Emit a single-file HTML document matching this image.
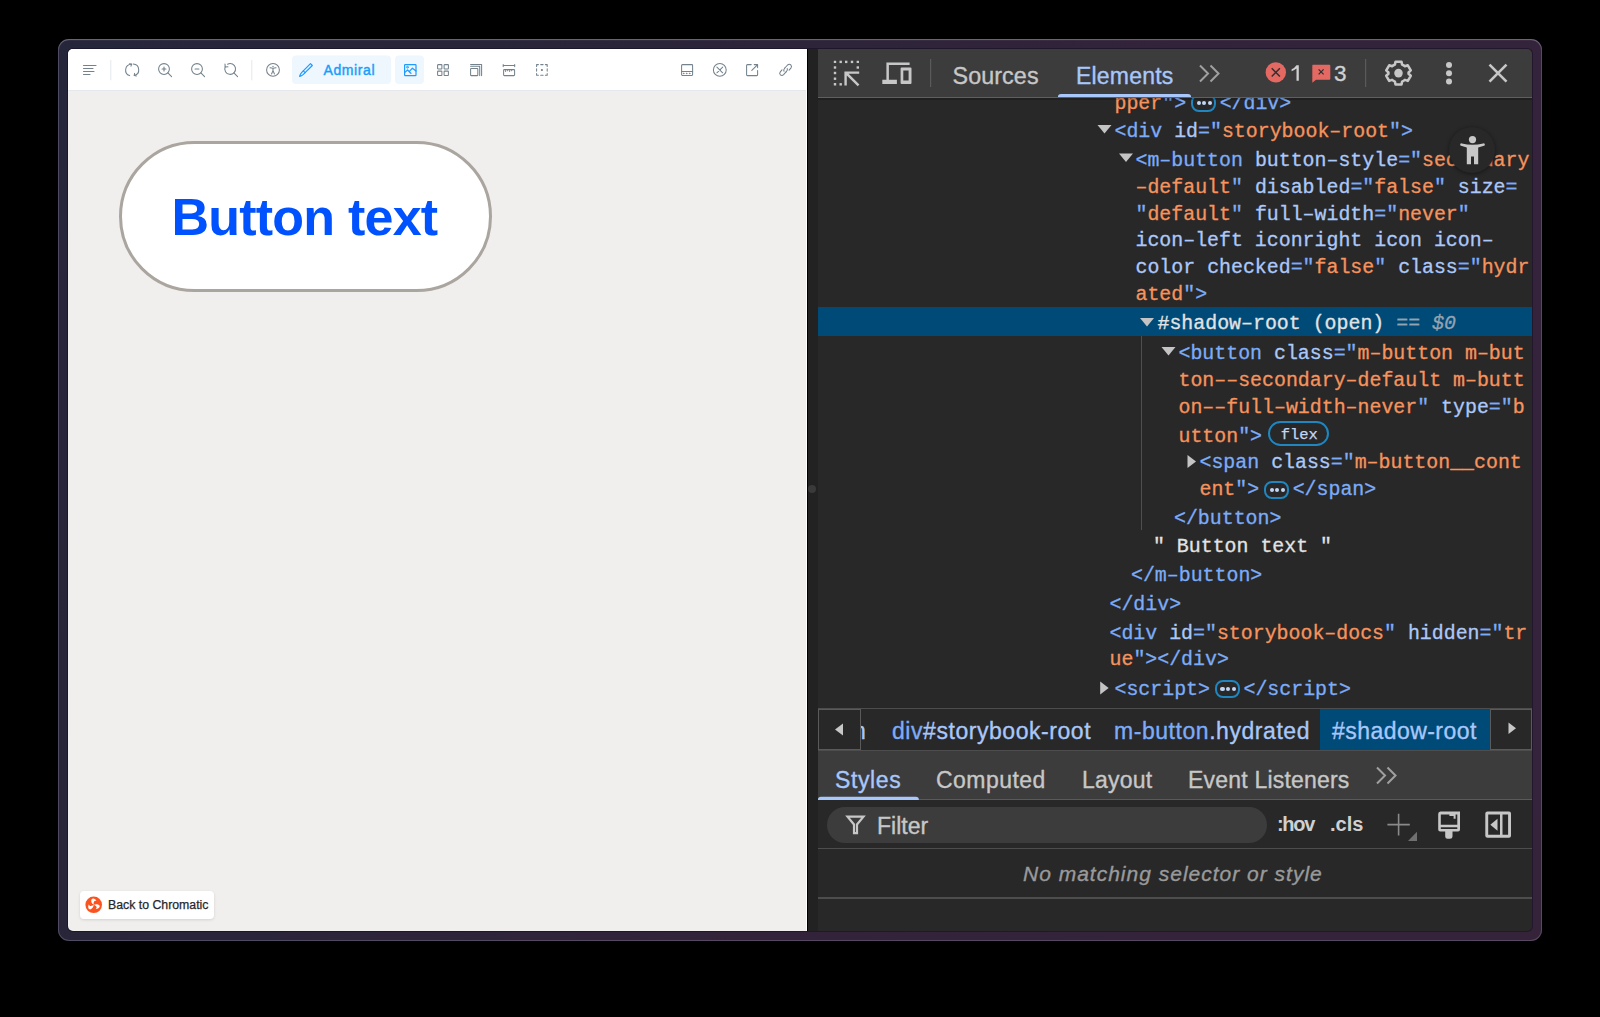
<!DOCTYPE html>
<html><head><meta charset="utf-8"><style>
*{box-sizing:border-box;margin:0;padding:0}
html,body{width:1600px;height:1017px;overflow:hidden;background:#000;font-family:"Liberation Sans",sans-serif}
.abs{position:absolute}
#frame{position:absolute;left:58px;top:39px;width:1484px;height:902px;border-radius:11px;
 background:linear-gradient(115deg,#26263a 0%,#2b2539 32%,#33233a 60%,#35233a 100%);
 box-shadow:inset 0 0 0 1px rgba(160,150,180,.33), inset 0 1.2px 0 0 rgba(190,180,210,.25)}
#inner{position:absolute;left:68px;top:49px;width:1464px;height:882px;border-radius:5px;overflow:hidden;background:#222;box-shadow:0 0 0 1px rgba(8,4,24,.4)}
#page{position:absolute;left:-68px;top:-49px;width:1600px;height:1017px}
.ln{position:absolute;white-space:pre;font-family:"Liberation Mono",monospace;font-size:19.9px;line-height:27px;height:27px;-webkit-text-stroke:0.3px currentColor}
.dots{display:inline-block;position:relative;width:24.5px;height:18px;margin:0 4px 0 5px;border:2px solid #1f86c0;border-radius:8px;vertical-align:-3.5px;-webkit-text-stroke:0}
.dots i{position:absolute;top:4.9px;width:4.2px;height:4.2px;border-radius:50%;background:#c2d6f5}
.dots i:nth-child(1){left:3.4px}.dots i:nth-child(2){left:9px}.dots i:nth-child(3){left:14.6px}
.flexb{display:inline-block;margin-left:6px;width:61px;height:25px;border:2px solid #1f86c0;border-radius:13px;font-size:15.5px;line-height:21px;padding-left:1.5px;padding-top:2px;text-align:center;color:#c2d6f5;vertical-align:3px;-webkit-text-stroke:0.25px currentColor}
.dtui{position:absolute;font-size:23px;line-height:28px;white-space:nowrap;font-family:"Liberation Sans",sans-serif;-webkit-text-stroke:0.35px currentColor}
.a11y{left:1449px;top:127px;width:46px;height:46px;border-radius:50%;background:#282828;box-shadow:0 1px 4px rgba(0,0,0,.45)}
</style></head><body>
<div id="frame"></div>
<div id="inner"><div id="page">
<div class="abs" style="left:68px;top:49px;width:738px;height:882px;background:#f0efed"></div>
<div class="abs" style="left:68px;top:49px;width:738px;height:42px;background:#fff;border-bottom:1px solid #e4e8ec"></div>
<svg class="abs" style="left:0;top:0" width="810" height="100" viewBox="0 0 810 100" fill="none" stroke="#73828c" stroke-width="1.05" stroke-linecap="round" stroke-linejoin="round">
 <path d="M83.5 65.5h12.5M83.5 68.5h9.5M83.5 71.5h10.5M83.5 74.5h6.5" stroke-width="1.1"/>
 <path d="M110.8 60.5v19.5M251.8 60.5v19.5" stroke="#e3e8ed" stroke-width="1"/>
 <g transform="translate(125 63)">
  <path d="M6.3 1.3 A5.8 5.8 0 0 0 4.6 12.6"/>
  <path d="M8.2 1.0 A5.8 5.8 0 0 1 9.4 12.4"/>
  <path d="M4.4 0.8 L6.6 1.1 L6.0 3.2"/>
  <path d="M9.6 10.4 L9.2 12.6 L11.4 13.0"/>
 </g>
 <g transform="translate(158 63)">
  <circle cx="6" cy="6" r="5.4"/>
  <path d="M9.9 9.9 L13.6 13.6"/>
  <path d="M6 4.1v3.8M4.1 6h3.8" stroke-width="1.15"/>
 </g>
 <g transform="translate(191 63)">
  <circle cx="6" cy="6" r="5.4"/>
  <path d="M9.9 9.9 L13.6 13.6"/>
  <path d="M4.1 6h3.8" stroke-width="1.15"/>
 </g>
 <g transform="translate(224 63)">
  <path d="M1.2 3.8 A5.4 5.4 0 1 0 3.6 1.2"/>
  <path d="M1.0 1.0 L1.2 3.9 L4.0 3.7"/>
  <path d="M9.9 9.9 L13.6 13.6"/>
 </g>
 <g transform="translate(266 63)">
  <circle cx="7" cy="6.9" r="6.4"/>
  <circle cx="7" cy="3.4" r="0.7" fill="#73828c" stroke="none"/>
  <path d="M4 4.8 Q7 5.6 10 4.8M7 5.3v2.6M5.6 10.9 L7 7.6 L8.4 10.9" stroke-width="1.1"/>
 </g>
 <rect x="292" y="55.5" width="99" height="28.5" rx="4" fill="#eef6fe" stroke="none"/>
 <rect x="395" y="55.5" width="29" height="28.5" rx="4" fill="#eef6fe" stroke="none"/>
 <g transform="translate(299 63)" stroke="#1e9bfc" stroke-width="1.2">
  <path d="M13.3 2.5 L11.5 0.7 L4.3 7.9 L6.1 9.7 Z"/>
  <path d="M4.3 7.9 L2.6 9.6 Q0.8 11.6 0.6 13.4 Q2.4 13.2 4.4 11.4 L6.1 9.7"/>
 </g>
 <g transform="translate(404 64)" stroke="#1e9bfc" stroke-width="1.2">
  <rect x="0.6" y="0.6" width="11.4" height="11" rx="0.6"/>
  <circle cx="3.4" cy="3.2" r="0.9" stroke-width="0.9"/>
  <path d="M0.6 8.6 L3.6 6.0 L6.3 8.8 M4.6 7.0 L7.0 9.4 M5.2 7.6 L8.4 4.2 L12 7.0"/>
 </g>
 <g transform="translate(437 64)">
  <rect x="0.6" y="0.6" width="4.3" height="4.3" rx="0.5"/>
  <rect x="7.1" y="0.6" width="4.3" height="4.3" rx="0.5"/>
  <rect x="0.6" y="7.1" width="4.3" height="4.3" rx="0.5"/>
  <rect x="7.1" y="7.1" width="4.3" height="4.3" rx="0.5"/>
 </g>
 <g transform="translate(470 64)">
  <rect x="0.6" y="4.4" width="7.2" height="7.2" rx="0.5"/>
  <path d="M0.6 2.3 H9.7 V11.6 M0.6 0.4 H11.6 V11.6"/>
 </g>
 <g transform="translate(503 64)">
  <path d="M0.2 1.5 H11.7 M0.2 0.4 V2.6 M11.7 0.4 V2.6"/>
  <rect x="0.6" y="5.6" width="11" height="6" rx="0.8"/>
  <path d="M2.6 5.8 V7.6 M4.6 5.8 V6.8 M6.6 5.8 V7.6 M8.6 5.8 V6.8" stroke-width="0.9"/>
 </g>
 <g transform="translate(536 64)">
  <path d="M0.6 2.4 V0.6 H2.4 M4.7 0.6 H7.1 M9.4 0.6 H11.2 V2.4 M11.2 4.7 V7.1 M11.2 9.4 V11.2 H9.4 M7.1 11.2 H4.7 M2.4 11.2 H0.6 V9.4 M0.6 7.1 V4.7"/>
  <circle cx="5.9" cy="6" r="0.55" fill="#73828c"/>
 </g>
 <g transform="translate(681 64)">
  <rect x="0.6" y="0.6" width="11" height="10.8" rx="0.8"/>
  <path d="M0.6 7.4 H11.6"/>
  <circle cx="2.6" cy="9.4" r="0.35" fill="#73828c" stroke-width="0.8"/>
  <circle cx="5.6" cy="9.4" r="0.35" fill="#73828c" stroke-width="0.8"/>
  <circle cx="8.6" cy="9.4" r="0.35" fill="#73828c" stroke-width="0.8"/>
 </g>
 <g transform="translate(713 63)">
  <circle cx="6.8" cy="6.9" r="6.4"/>
  <path d="M3.9 4.1 L9.7 9.8 M9.7 4.1 L3.9 9.8"/>
 </g>
 <g transform="translate(746 64)">
  <path d="M5.2 0.6 H1.4 Q0.6 0.6 0.6 1.4 V10.8 Q0.6 11.6 1.4 11.6 H10.8 Q11.6 11.6 11.6 10.8 V6.4"/>
  <path d="M8.2 0.6 H11.6 V3.6 M11.4 0.8 L5.8 6.4"/>
 </g>
 <g transform="translate(779 63)">
  <path d="M5.8 5.0 L8.6 2.0 Q10.2 0.6 11.8 1.9 Q13.2 3.4 11.9 5.1 L10.1 7.1"/>
  <path d="M7.3 8.7 L4.6 11.7 Q3.0 13.2 1.4 11.9 Q0 10.4 1.3 8.8 L3.0 6.9"/>
  <path d="M5.0 8.3 Q4.2 6.9 5.8 5.0 M8.2 5.6 Q9.0 7.0 7.3 8.7"/>
 </g>
</svg>
<div class="abs" style="left:323.5px;top:61px;font-size:14px;color:#159efc;line-height:18px;white-space:nowrap;letter-spacing:0.6px;-webkit-text-stroke:0.4px currentColor">Admiral</div>
<div class="abs" style="left:118.5px;top:141px;width:373px;height:150.5px;border:3px solid #aaa59f;border-radius:80px;background:#fff"></div>
<div class="abs" style="left:171.5px;top:187.8px;font-size:52px;letter-spacing:-0.78px;font-weight:bold;color:#0052fe;line-height:58px;white-space:nowrap">Button text</div>
<div class="abs" style="left:80px;top:891px;width:134px;height:28px;background:#fff;border-radius:4px;box-shadow:0 1px 3px rgba(0,0,0,.12)"></div>
<svg class="abs" style="left:85px;top:896px" width="18" height="18" viewBox="0 0 18 18">
 <circle cx="8.7" cy="8.8" r="8.3" fill="#fc521f"/>
 <g fill="#fff">
  <path d="M8.7 8.8 Q5.6 6.6 6.4 3.4 Q7.2 2.6 8.4 2.6 Q10.6 3.0 11.4 5.0 Q10.4 4.6 9.2 5.2 Q8.2 6.6 8.7 8.8 Z"/>
  <path d="M8.7 8.8 Q12.2 7.2 14.6 9.5 Q14.9 10.6 14.3 11.6 Q12.8 13.3 10.7 13.0 Q11.6 12.3 11.7 11.0 Q10.9 9.5 8.7 8.8 Z"/>
  <path d="M8.7 8.8 Q8.3 12.6 5.1 13.5 Q4.0 13.2 3.4 12.2 Q2.7 10.1 3.9 8.3 Q4.0 9.4 5.1 10.1 Q6.8 10.2 8.7 8.8 Z"/>
 </g>
</svg>
<div class="abs" style="left:108px;top:898px;font-size:12.3px;color:#24282c;line-height:14px;white-space:nowrap;-webkit-text-stroke:0.25px currentColor">Back to Chromatic</div>

<div class="abs" style="left:806px;top:49px;width:1px;height:882px;background:#fff"></div>
<div class="abs" style="left:807px;top:49px;width:1px;height:882px;background:#000"></div>
<div class="abs" style="left:808px;top:49px;width:10px;height:882px;background:#222"></div>
<div class="abs" style="left:807.5px;top:485px;width:8px;height:8px;border-radius:50%;background:#3a3a3a"></div>

<!-- devtools -->
<div class="abs" style="left:818px;top:49px;width:714px;height:882px;background:#282828"></div>
<div class="abs" style="left:818px;top:98px;width:714px;height:610px;overflow:hidden">
 <div class="abs" style="left:-818px;top:-98px;width:1600px;height:1017px">
  <div class="abs" style="left:818px;top:307px;width:714px;height:28.5px;background:#004a77"></div>
  <div class="abs" style="left:1140.5px;top:336px;width:1.2px;height:194px;background:#4f4f4f"></div>
  <svg class="abs" style="left:0;top:0" width="1600" height="1017" fill="#c4c4c4">
   <path d="M1097.5 125h14l-7.0 8.5z"/><path d="M1119 153.5h14l-7.0 8.5z"/><path d="M1140 318h14l-7.0 8.5z"/><path d="M1161.5 347h14l-7.0 8.5z"/>
   <path d="M1187.5 455v13l8.5 -6.5z"/><path d="M1100.2 681.5v13l8.5 -6.5z"/>
  </svg>
  <div class="ln" style="left:1114.5px;top:89.5px"><span style="color:#f7935c">pper</span><span style="color:#7cacf8">&quot;&gt;</span><span class="dots"><i></i><i></i><i></i></span><span style="color:#7cacf8">&lt;/div&gt;</span></div>
<div class="ln" style="left:1114.5px;top:118.0px"><span style="color:#7cacf8">&lt;div</span> <span style="color:#acc8f8">id</span><span style="color:#7cacf8">=&quot;</span><span style="color:#f7935c">storybook–root</span><span style="color:#7cacf8">&quot;&gt;</span></div>
<div class="ln" style="left:1135.5px;top:146.7px"><span style="color:#7cacf8">&lt;m–button</span> <span style="color:#acc8f8">button–style</span><span style="color:#7cacf8">=&quot;</span><span style="color:#f7935c">secondary</span></div>
<div class="ln" style="left:1135.5px;top:173.7px"><span style="color:#f7935c">–default</span><span style="color:#7cacf8">&quot;</span> <span style="color:#acc8f8">disabled</span><span style="color:#7cacf8">=&quot;</span><span style="color:#f7935c">false</span><span style="color:#7cacf8">&quot;</span> <span style="color:#acc8f8">size</span><span style="color:#7cacf8">=</span></div>
<div class="ln" style="left:1135.5px;top:200.7px"><span style="color:#7cacf8">&quot;</span><span style="color:#f7935c">default</span><span style="color:#7cacf8">&quot;</span> <span style="color:#acc8f8">full–width</span><span style="color:#7cacf8">=&quot;</span><span style="color:#f7935c">never</span><span style="color:#7cacf8">&quot;</span></div>
<div class="ln" style="left:1135.5px;top:227.2px"><span style="color:#acc8f8">icon–left iconright icon icon–</span></div>
<div class="ln" style="left:1135.5px;top:254.2px"><span style="color:#acc8f8">color</span> <span style="color:#acc8f8">checked</span><span style="color:#7cacf8">=&quot;</span><span style="color:#f7935c">false</span><span style="color:#7cacf8">&quot;</span> <span style="color:#acc8f8">class</span><span style="color:#7cacf8">=&quot;</span><span style="color:#f7935c">hydr</span></div>
<div class="ln" style="left:1135.5px;top:281.2px"><span style="color:#f7935c">ated</span><span style="color:#7cacf8">&quot;&gt;</span></div>
<div class="ln" style="left:1157.5px;top:310.2px"><span style="color:#e3e3e3">#shadow–root (open)</span> <span style="color:#94a3b0">==</span> <span style="color:#94a3b0;font-style:italic">$0</span></div>
<div class="ln" style="left:1178.5px;top:340.0px"><span style="color:#7cacf8">&lt;button</span> <span style="color:#acc8f8">class</span><span style="color:#7cacf8">=&quot;</span><span style="color:#f7935c">m–button m–but</span></div>
<div class="ln" style="left:1178.5px;top:367.1px"><span style="color:#f7935c">ton––secondary–default m–butt</span></div>
<div class="ln" style="left:1178.5px;top:394.1px"><span style="color:#f7935c">on––full–width–never</span><span style="color:#7cacf8">&quot;</span> <span style="color:#acc8f8">type</span><span style="color:#7cacf8">=&quot;</span><span style="color:#f7935c">b</span></div>
<div class="ln" style="left:1178.5px;top:420.7px"><span style="color:#f7935c">utton</span><span style="color:#7cacf8">&quot;&gt;</span><span class="flexb">flex</span></div>
<div class="ln" style="left:1199.5px;top:449.4px"><span style="color:#7cacf8">&lt;span</span> <span style="color:#acc8f8">class</span><span style="color:#7cacf8">=&quot;</span><span style="color:#f7935c">m–button__cont</span></div>
<div class="ln" style="left:1199.5px;top:476.4px"><span style="color:#f7935c">ent</span><span style="color:#7cacf8">&quot;&gt;</span><span class="dots"><i></i><i></i><i></i></span><span style="color:#7cacf8">&lt;/span&gt;</span></div>
<div class="ln" style="left:1174.0px;top:504.7px"><span style="color:#7cacf8">&lt;/button&gt;</span></div>
<div class="ln" style="left:1153.0px;top:532.9px"><span style="color:#e3e3e3">&quot; Button text &quot;</span></div>
<div class="ln" style="left:1131.0px;top:561.9px"><span style="color:#7cacf8">&lt;/m–button&gt;</span></div>
<div class="ln" style="left:1109.5px;top:590.5px"><span style="color:#7cacf8">&lt;/div&gt;</span></div>
<div class="ln" style="left:1109.5px;top:619.6px"><span style="color:#7cacf8">&lt;div</span> <span style="color:#acc8f8">id</span><span style="color:#7cacf8">=&quot;</span><span style="color:#f7935c">storybook–docs</span><span style="color:#7cacf8">&quot;</span> <span style="color:#acc8f8">hidden</span><span style="color:#7cacf8">=&quot;</span><span style="color:#f7935c">tr</span></div>
<div class="ln" style="left:1109.5px;top:646.3px"><span style="color:#f7935c">ue</span><span style="color:#7cacf8">&quot;&gt;</span><span style="color:#7cacf8">&lt;/div&gt;</span></div>
<div class="ln" style="left:1114.5px;top:675.5px"><span style="color:#7cacf8">&lt;script&gt;</span><span class="dots"><i></i><i></i><i></i></span><span style="color:#7cacf8">&lt;/script&gt;</span></div>
  <div class="abs a11y"></div>
  <svg class="abs" style="left:1455px;top:132px" width="36" height="36" viewBox="0 0 36 36" fill="#c7c7c7">
   <circle cx="17.5" cy="7.6" r="3.6"/>
   <path d="M5.2 12.2 Q5.6 11 6.8 11.4 Q17.5 14.2 28.2 11.4 Q29.4 11 29.8 12.2 Q30.2 13.4 29 13.8 L23.2 15.4 V32.2 H19 V24.6 H16 V32.2 H11.8 V15.4 L6 13.8 Q4.8 13.4 5.2 12.2 Z"/>
  </svg>
 </div>
</div>
<!-- devtools toolbar -->
<div class="abs" style="left:818px;top:49px;width:714px;height:48px;background:#3c3c3c"></div>
<div class="abs" style="left:818px;top:97px;width:714px;height:1px;background:#5f5f5f"></div>
<div class="abs" style="left:818px;top:98px;width:714px;height:1.5px;background:rgba(0,0,0,.18)"></div>
<svg class="abs" style="left:0;top:0" width="1600" height="120" fill="#c7c7c7">
 <!-- inspect dots -->
 <g>
  <rect x="833.8" y="60.7" width="2.4" height="2.4" rx="0.3"/><rect x="839.5" y="60.7" width="2.4" height="2.4"/><rect x="845" y="60.7" width="2.4" height="2.4"/><rect x="850.8" y="60.7" width="2.4" height="2.4"/><rect x="856.6" y="60.7" width="2.4" height="2.4" rx="0.3"/>
  <rect x="833.8" y="66.3" width="2.4" height="2.4"/><rect x="833.8" y="71.8" width="2.4" height="2.4"/><rect x="833.8" y="77.5" width="2.4" height="2.4"/><rect x="833.8" y="83.1" width="2.4" height="2.4" rx="0.3"/>
  <rect x="856.6" y="66.3" width="2.4" height="2.4"/><rect x="839.5" y="83.1" width="2.4" height="2.4"/>
  <path d="M844.4 71.4 H859.2 V73.8 H848.6 L859.4 84.6 L857.7 86.3 L846.8 75.4 V85.6 H844.4 Z"/>
 </g>
 <!-- device -->
 <path d="M886.4 62.4 H909.6 V64.9 H888.9 V79.8 H896.9 V84.1 H882.3 V79.8 H886.4 Z"/>
 <path fill-rule="evenodd" d="M901.6 67.5 H910.5 Q911.5 67.5 911.5 68.5 V83.1 Q911.5 84.1 910.5 84.1 H901.6 Q900.6 84.1 900.6 83.1 V68.5 Q900.6 67.5 901.6 67.5 Z M903.3 70.5 V80.6 H908.6 V70.5 Z"/>
 <rect x="930" y="59" width="1.2" height="28" fill="#5a5a5a"/>
 <rect x="1365" y="59" width="1.2" height="28" fill="#5a5a5a"/>
 <!-- >> -->
 <path d="M1200 65.5 L1208 73.5 L1200 81.5 M1210.5 65.5 L1218.5 73.5 L1210.5 81.5" fill="none" stroke="#a0a0a0" stroke-width="2"/>
 <!-- underline -->
 <path d="M1058 97 V96.5 Q1058 94 1061 94 H1188 Q1191 94 1191 96.5 V97 Z" fill="#a8c7fa"/>
 <!-- error -->
 <circle cx="1275.8" cy="72.4" r="10.2" fill="#e46962"/>
 <path d="M1271.7 68.3 L1279.9 76.5 M1279.9 68.3 L1271.7 76.5" stroke="#303030" stroke-width="1.5"/>
 <path d="M1313 64.7 H1329.3 Q1330.3 64.7 1330.3 65.7 V78.7 Q1330.3 79.7 1329.3 79.7 H1316 L1312.3 82.8 V65.7 Q1312.3 64.7 1313 64.7 Z" fill="#e46962"/>
 <path d="M1318.6 69.4 L1323.6 74.4 M1323.6 69.4 L1318.6 74.4" stroke="#303030" stroke-width="1.3"/>
 <!-- gear -->
 <g transform="translate(1398.5 73.1) scale(0.93)">
  <path fill="none" stroke="#c7c7c7" stroke-width="2.75" stroke-linejoin="round" d="M-3.2 -12.3 H3.2 L3.9 -9.1 Q5.6 -8.4 6.9 -7.3 L10 -8.4 L13.2 -2.9 L10.8 -0.7 Q11 0 10.8 0.7 L13.2 2.9 L10 8.4 L6.9 7.3 Q5.6 8.4 3.9 9.1 L3.2 12.3 H-3.2 L-3.9 9.1 Q-5.6 8.4 -6.9 7.3 L-10 8.4 L-13.2 2.9 L-10.8 0.7 Q-11 0 -10.8 -0.7 L-13.2 -2.9 L-10 -8.4 L-6.9 -7.3 Q-5.6 -8.4 -3.9 -9.1 Z"/>
  <circle cx="0" cy="0" r="4.6"/>
 </g>
 <circle cx="1449" cy="64.9" r="3"/><circle cx="1449" cy="73.3" r="3"/><circle cx="1449" cy="81.5" r="3"/>
 <path d="M1489.5 64.6 L1506.5 81.6 M1506.5 64.6 L1489.5 81.6" stroke="#c7c7c7" stroke-width="2.6"/>
</svg>
<div class="abs dtui" style="left:952.5px;top:62px;color:#c7c7c7;font-size:23.3px;letter-spacing:0.1px">Sources</div>
<div class="abs dtui" style="left:1076px;top:62px;color:#a8c7fa;letter-spacing:0.2px">Elements</div>
<svg class="abs" style="left:1285px;top:60px" width="20" height="25" fill="#d0d0d0"><path d="M11.5 5.3 H13.8 V20.8 H11.5 V8.6 Q9.4 10.4 6.6 11.2 V9.2 Q9.8 8.0 11.5 5.3 Z"/></svg>
<div class="abs dtui" style="left:1334px;top:59.5px;color:#d0d0d0;font-size:22.5px">3</div>

<!-- breadcrumb bar -->
<div class="abs" style="left:818px;top:708px;width:714px;height:1px;background:#4d4d4d"></div>
<div class="abs" style="left:818px;top:709px;width:714px;height:41px;background:#282828"></div>
<div class="abs" style="left:1319.5px;top:709px;width:170px;height:41px;background:#004a77"></div>
<div class="abs" style="left:818px;top:709px;width:43px;height:41px;border:1.5px solid #5a5a5a;background:#282828"></div>
<div class="abs" style="left:1490px;top:709px;width:42px;height:41px;border:1.5px solid #5a5a5a;background:#282828"></div>
<div class="abs" style="left:861px;top:709px;width:8px;height:41px;overflow:hidden"><div class="abs dtui" style="left:-8px;top:8px;color:#a8c7fa">n</div></div>
<svg class="abs" style="left:0;top:700px" width="1600" height="60" fill="#c7c7c7">
 <path d="M843 23.5 V35.5 L835 29.5 Z"/>
 <path d="M1508.5 22.5 V34 L1516 28.2 Z"/>
</svg>
<div class="abs dtui" style="left:892px;top:717px;letter-spacing:0.55px"><span style="color:#7cacf8">div</span><span style="color:#a8c7fa">#storybook-root</span></div>
<div class="abs dtui" style="left:1114px;top:717px;letter-spacing:0.55px"><span style="color:#7cacf8">m-button</span><span style="color:#a8c7fa">.hydrated</span></div>
<div class="abs dtui" style="left:1332px;top:717px;color:#a8c7fa;letter-spacing:0.45px">#shadow-root</div>
<div class="abs" style="left:818px;top:750px;width:714px;height:1px;background:#4d4d4d"></div>

<!-- styles tabs -->
<div class="abs" style="left:818px;top:751px;width:714px;height:48px;background:#3c3c3c"></div>
<div class="abs" style="left:818px;top:799px;width:714px;height:1px;background:#5a5a5a"></div>
<svg class="abs" style="left:0;top:740px" width="1600" height="120">
 <path d="M818 60.5 V59.5 Q818 56.8 821 56.8 H915.8 Q918.8 56.8 918.8 59.5 V60.5 Z" fill="#a8c7fa"/>
 <path d="M1377 27.5 L1385 35.5 L1377 43.5 M1387.5 27.5 L1395.5 35.5 L1387.5 43.5" fill="none" stroke="#a0a0a0" stroke-width="2"/>
</svg>
<div class="abs dtui" style="left:835px;top:766px;color:#a8c7fa;letter-spacing:0.6px">Styles</div>
<div class="abs dtui" style="left:936px;top:766px;color:#c7c7c7;letter-spacing:0.45px">Computed</div>
<div class="abs dtui" style="left:1082px;top:766px;color:#c7c7c7;letter-spacing:0.2px">Layout</div>
<div class="abs dtui" style="left:1188px;top:766px;color:#c7c7c7;letter-spacing:0.2px">Event Listeners</div>

<!-- filter -->
<div class="abs" style="left:818px;top:800px;width:714px;height:48px;background:#282828"></div>
<div class="abs" style="left:826.5px;top:806.5px;width:440px;height:36.5px;border-radius:18.5px;background:#3c3c3c"></div>
<svg class="abs" style="left:0;top:800px" width="1600" height="50">
 <path d="M847.5 16.6 H863.5 L857 24.5 V33.2 H854 V24.5 Z" fill="none" stroke="#c7c7c7" stroke-width="2.2" stroke-linejoin="miter"/>
 <path d="M1398.6 13.7 V35.6 M1387.4 24.6 H1409.8" stroke="#8a8a8a" stroke-width="1.6"/>
 <path d="M1417 31.8 V41 H1408 Z" fill="#707070"/>
 <!-- paint -->
 <path fill="#c7c7c7" fill-rule="evenodd" d="M1440.5 11.5 H1460 V29.5 Q1460 31.5 1458 31.5 H1452.5 V36.5 Q1452.5 38.8 1450 38.8 H1447.5 Q1445.2 38.8 1445.2 36.5 V31.5 H1440.2 Q1438.2 31.5 1438.2 29.5 V14 Q1438.2 11.5 1440.5 11.5 Z M1440.8 14.4 V24.8 H1457.3 V14.4 H1455.6 V18.8 H1453.6 V16.1 H1449.4 V14.4 Z M1440.8 27.2 V28.9 H1457.3 V27.2 Z"/>
 <!-- sidebar -->
 <path fill="#c7c7c7" fill-rule="evenodd" d="M1487.5 11.5 H1509 Q1511 11.5 1511 13.5 V35.7 Q1511 37.7 1509 37.7 H1487.5 Q1485.3 37.7 1485.3 35.7 V13.5 Q1485.3 11.5 1487.5 11.5 Z M1488.2 14.4 V34.8 H1500 V14.4 Z M1502.5 14.4 V34.8 H1508.1 V14.4 Z"/>
 <path d="M1497.5 18.7 V30.8 L1490.3 24.7 Z" fill="#c7c7c7"/>
</svg>
<div class="abs dtui" style="left:877px;top:811.5px;color:#c7c7c7;font-size:23px">Filter</div>
<div class="abs" style="left:1277px;top:811px;color:#d0d0d0;font-size:20px;font-weight:bold;letter-spacing:-1.3px;line-height:26px">:hov</div>
<div class="abs" style="left:1330px;top:811px;color:#d0d0d0;font-size:20px;font-weight:bold;line-height:26px">.cls</div>
<div class="abs" style="left:818px;top:848px;width:714px;height:1px;background:#4d4d4d"></div>
<div class="abs dtui" style="left:1023px;top:859.5px;color:#9a9a9a;font-size:21px;font-style:italic;letter-spacing:1px">No matching selector or style</div>
<div class="abs" style="left:818px;top:897px;width:714px;height:1.5px;background:#4d4d4d"></div>

</div></div>
</body></html>
